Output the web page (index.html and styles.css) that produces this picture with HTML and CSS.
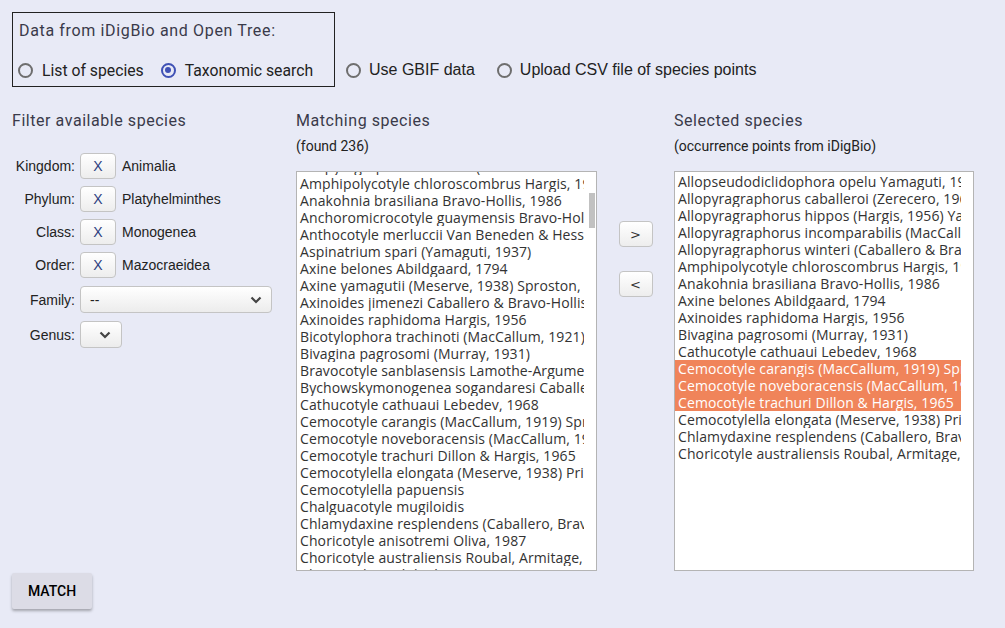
FILE: index.html
```html
<!DOCTYPE html>
<html>
<head>
<meta charset="utf-8">
<link rel="stylesheet" href="styles.css">
</head>
<body>
<div class="source-row">
  <div class="source-box">
    <div class="source-title">Data from iDigBio and Open Tree:</div>
    <div class="radios">
      <label class="radio"><span class="dot"></span>List of species</label>
      <label class="radio"><span class="dot on"></span>Taxonomic search</label>
    </div>
  </div>
  <div class="radios outside">
    <label class="radio"><span class="dot"></span>Use GBIF data</label>
    <label class="radio"><span class="dot"></span>Upload CSV file of species points</label>
  </div>
</div>

<div class="main">
  <div class="col filter">
    <h3 class="head">Filter available species</h3>
    <div class="frows">
      <div class="frow"><span class="flabel">Kingdom:</span><span class="xbtn">X</span><span class="fval">Animalia</span></div>
      <div class="frow"><span class="flabel">Phylum:</span><span class="xbtn">X</span><span class="fval">Platyhelminthes</span></div>
      <div class="frow"><span class="flabel">Class:</span><span class="xbtn">X</span><span class="fval">Monogenea</span></div>
      <div class="frow"><span class="flabel">Order:</span><span class="xbtn">X</span><span class="fval">Mazocraeidea</span></div>
      <div class="frow"><span class="flabel">Family:</span><span class="sel wide"><span class="seltext">--</span><svg class="chev" width="12" height="8" viewBox="0 0 12 8"><path d="M1.5 1.5 L6 6 L10.5 1.5" fill="none" stroke="#444" stroke-width="2.2"/></svg></span></div>
      <div class="frow"><span class="flabel">Genus:</span><span class="sel narrow"><svg class="chev" width="12" height="8" viewBox="0 0 12 8"><path d="M1.5 1.5 L6 6 L10.5 1.5" fill="none" stroke="#444" stroke-width="2.2"/></svg></span></div>
    </div>
  </div>

  <div class="col">
    <h3 class="head">Matching species</h3>
    <div class="sub">(found 236)</div>
    <div class="listbox scrolled">
      <div class="opts shifted">
        <div class="opt">Allopyragraphorus winteri (Caballero &amp; Bravo-Hollis, 1955)</div>
        <div class="opt">Amphipolycotyle chloroscombrus Hargis, 1957</div>
        <div class="opt">Anakohnia brasiliana Bravo-Hollis, 1986</div>
        <div class="opt">Anchoromicrocotyle guaymensis Bravo-Hollis, 1981</div>
        <div class="opt">Anthocotyle merluccii Van Beneden &amp; Hesse, 1863</div>
        <div class="opt">Aspinatrium spari (Yamaguti, 1937)</div>
        <div class="opt">Axine belones Abildgaard, 1794</div>
        <div class="opt">Axine yamagutii (Meserve, 1938) Sproston, 1946</div>
        <div class="opt">Axinoides jimenezi Caballero &amp; Bravo-Hollis, 1963</div>
        <div class="opt">Axinoides raphidoma Hargis, 1956</div>
        <div class="opt">Bicotylophora trachinoti (MacCallum, 1921) Price, 1936</div>
        <div class="opt">Bivagina pagrosomi (Murray, 1931)</div>
        <div class="opt">Bravocotyle sanblasensis Lamothe-Argumedo, 1981</div>
        <div class="opt">Bychowskymonogenea sogandaresi Caballero, 1972</div>
        <div class="opt">Cathucotyle cathuaui Lebedev, 1968</div>
        <div class="opt">Cemocotyle carangis (MacCallum, 1919) Sproston, 1946</div>
        <div class="opt">Cemocotyle noveboracensis (MacCallum, 1915)</div>
        <div class="opt">Cemocotyle trachuri Dillon &amp; Hargis, 1965</div>
        <div class="opt">Cemocotylella elongata (Meserve, 1938) Price, 1962</div>
        <div class="opt">Cemocotylella papuensis</div>
        <div class="opt">Chalguacotyle mugiloidis</div>
        <div class="opt">Chlamydaxine resplendens (Caballero, Bravo-Hollis, 1962)</div>
        <div class="opt">Choricotyle anisotremi Oliva, 1987</div>
        <div class="opt">Choricotyle australiensis Roubal, Armitage, 1988</div>
        <div class="opt">Choricotyle caulolatili (Meserve, 1938) Sproston, 1946</div>
      </div>
      <div class="thumb"></div>
    </div>
  </div>

  <div class="movers">
    <span class="mbtn">&gt;</span>
    <span class="mbtn">&lt;</span>
  </div>

  <div class="col">
    <h3 class="head">Selected species</h3>
    <div class="sub">(occurrence points from iDigBio)</div>
    <div class="listbox right">
      <div class="opts">
        <div class="opt">Allopseudodiclidophora opelu Yamaguti, 1965</div>
        <div class="opt">Allopyragraphorus caballeroi (Zerecero, 1960)</div>
        <div class="opt">Allopyragraphorus hippos (Hargis, 1956) Yamaguti, 1963</div>
        <div class="opt">Allopyragraphorus incomparabilis (MacCallum, 1917)</div>
        <div class="opt">Allopyragraphorus winteri (Caballero &amp; Bravo-Hollis, 1955)</div>
        <div class="opt">Amphipolycotyle chloroscombrus Hargis, 1957</div>
        <div class="opt">Anakohnia brasiliana Bravo-Hollis, 1986</div>
        <div class="opt">Axine belones Abildgaard, 1794</div>
        <div class="opt">Axinoides raphidoma Hargis, 1956</div>
        <div class="opt">Bivagina pagrosomi (Murray, 1931)</div>
        <div class="opt">Cathucotyle cathuaui Lebedev, 1968</div>
        <div class="opt sel-opt">Cemocotyle carangis (MacCallum, 1919) Sproston, 1946</div>
        <div class="opt sel-opt">Cemocotyle noveboracensis (MacCallum, 1915)</div>
        <div class="opt sel-opt">Cemocotyle trachuri Dillon &amp; Hargis, 1965</div>
        <div class="opt">Cemocotylella elongata (Meserve, 1938) Price, 1962</div>
        <div class="opt">Chlamydaxine resplendens (Caballero, Bravo-Hollis, 1962)</div>
        <div class="opt">Choricotyle australiensis Roubal, Armitage, 1988</div>
      </div>
    </div>
  </div>
</div>

<div class="actions">
  <span class="match">MATCH</span>
</div>
</body>
</html>
```

FILE: styles.css
```css
html, body {
  margin: 0;
  padding: 0;
  background: #e8eaf6;
}
body {
  padding: 12px;
  font-family: Roboto, "Liberation Sans", sans-serif;
  color: #333;
  height: 628px;
  box-sizing: border-box;
}
.source-row {
  display: flex;
  align-items: flex-end;
}
.source-box {
  border: 1px solid #222;
  width: 321px;
  height: 73px;
  box-sizing: content-box;
  padding: 0;
}
.source-title {
  font-size: 16px;
  letter-spacing: 0.65px;
  color: #3a3a4a;
  margin: 8px 0 0 6px;
  line-height: 19px;
}
.radios {
  display: flex;
  gap: 17px;
  margin: 21px 0 0 5px;
  height: 18px;
  align-items: center;
}
.radio {
  display: flex;
  align-items: center;
  font-size: 15.75px;
  color: #222;
}
.radios.outside {
  margin: 0 0 8px 11px;
  gap: 22px;
}
.radios.outside .radio {
  font-family: "Liberation Sans", Arial, sans-serif;
  font-size: 16px;
}
.radios.outside .dot {
  margin-right: 8px;
}
.dot {
  width: 15px;
  height: 15px;
  box-sizing: border-box;
  border: 2px solid #6e6e6e;
  border-radius: 50%;
  margin-right: 9px;
  position: relative;
  background: transparent;
}
.dot.on {
  border-color: #3f51b5;
}
.dot.on::after {
  content: "";
  position: absolute;
  left: 2.5px;
  top: 2.5px;
  width: 6px;
  height: 6px;
  border-radius: 50%;
  background: #3f51b5;
}
.main {
  display: flex;
  margin-top: 24px;
}
.col {
  display: flex;
  flex-direction: column;
}
.filter {
  width: 284px;
}
.head {
  margin: 0;
  font-size: 16px;
  font-weight: normal;
  letter-spacing: 0.55px;
  line-height: 20px;
  color: #3a3a4a;
}
.sub {
  font-size: 14px;
  line-height: 16px;
  margin-top: 7px;
  color: #222;
}
.frows {
  display: flex;
  flex-direction: column;
  gap: 7px;
  margin-top: 22px;
  font-family: "Liberation Sans", Arial, sans-serif;
  font-size: 14px;
  color: #222;
}
.frow {
  display: flex;
  align-items: center;
  height: 26px;
}
.frow:nth-child(5) {
  height: 27px;
  margin-top: 1px;
}
.frow:nth-child(6) {
  height: 27px;
  margin-top: 1px;
}
.flabel {
  width: 63px;
  text-align: right;
  margin-right: 5px;
}
.xbtn {
  width: 36px;
  height: 26px;
  box-sizing: border-box;
  border: 1px solid #c4c4c4;
  border-radius: 4px;
  background: linear-gradient(#ffffff, #ededed);
  display: flex;
  align-items: center;
  justify-content: center;
  color: #2e3f80;
  font-size: 14px;
  margin-right: 6px;
}
.sel {
  height: 27px;
  box-sizing: border-box;
  border: 1px solid #c4c4c4;
  border-radius: 4px;
  background: linear-gradient(#ffffff, #ececec);
  display: flex;
  align-items: center;
  justify-content: space-between;
  padding: 0 9px 0 9px;
}
.sel.wide { width: 192px; }
.sel.narrow { width: 42px; justify-content: flex-end; padding-right: 10px; }
.seltext {
  font-size: 14px;
  color: #222;
}
.listbox {
  margin-top: 17px;
  width: 301px;
  height: 400px;
  box-sizing: border-box;
  border: 1px solid #b4b4b4;
  background: #fff;
  overflow: hidden;
  position: relative;
  font-family: "Open Sans", "DejaVu Sans", sans-serif;
  font-size: 14px;
  color: #333;
  padding: 1px 12px 0 0;
}
.listbox.right {
  width: 300px;
}
.opts.shifted {
  margin-top: -15px;
}
.opt {
  height: 17px;
  line-height: 17px;
  white-space: nowrap;
  overflow: hidden;
  padding-left: 3px;
  letter-spacing: 0.1px;
}
.sel-opt {
  background: #f0845a;
  color: #fff;
}
.thumb {
  position: absolute;
  right: 1px;
  top: 21px;
  width: 6px;
  height: 35px;
  background: #c1c1c1;
}
.movers {
  width: 77px;
  display: flex;
  flex-direction: column;
  align-items: center;
  padding-top: 110px;
  gap: 24px;
  box-sizing: border-box;
}
.mbtn {
  width: 34px;
  height: 26px;
  box-sizing: border-box;
  border: 1px solid #c4c4c4;
  border-radius: 4px;
  background: linear-gradient(#ffffff, #ededed);
  display: flex;
  align-items: center;
  justify-content: center;
  font-size: 13px;
  color: #333;
  font-family: "DejaVu Sans", sans-serif;
}
.actions {
  margin-top: 2px;
}
.match {
  display: inline-flex;
  align-items: center;
  justify-content: center;
  width: 80px;
  height: 36px;
  background: #dcdce6;
  border-radius: 2px;
  box-shadow: 0 2px 3px rgba(0,0,0,0.3);
  font-size: 14px;
  font-weight: 500;
  color: #000;
}
```
